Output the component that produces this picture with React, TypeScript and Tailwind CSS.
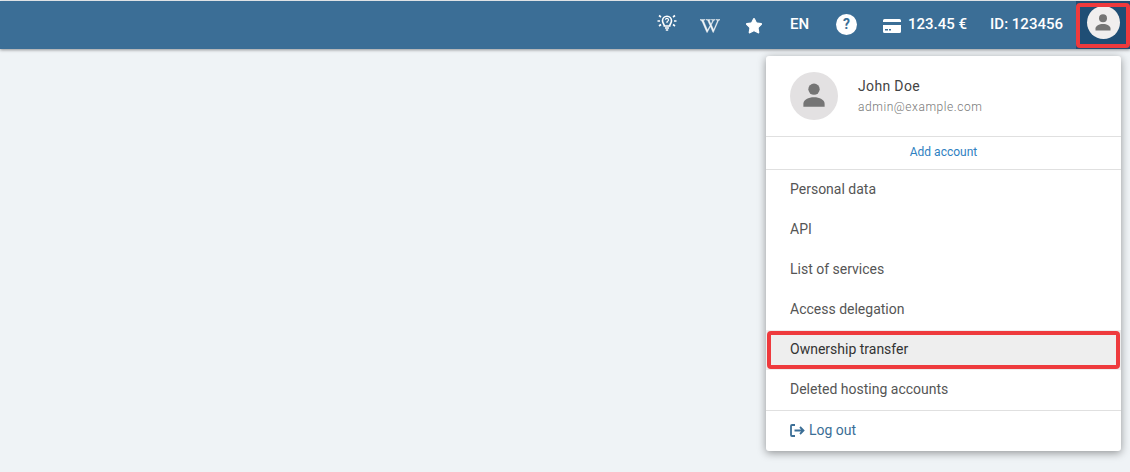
import { Star } from "lucide-react";
import { FaWikipediaW } from "react-icons/fa";

const Avatar = ({ size }: { size: number }) => (
  <svg width={size} height={size} viewBox="0 0 24 24" fill="#757575">
    <circle cx="12" cy="7.2" r="4" />
    <path d="M4.500 19.500v-2c0-2.800 3.600-4.600 7.500-4.600s7.500 1.800 7.500 4.600v2z" />
  </svg>
);

const items = ["Personal data", "API", "List of services", "Access delegation", "Ownership transfer", "Deleted hosting accounts"];

const App = () => {
  return (
    <div className="relative h-[472px] w-[1130px] overflow-hidden bg-[#eff3f6] font-['Roboto',sans-serif]">
      <header className="mt-px flex h-[48px] items-center justify-end bg-[#3b6e96] text-white shadow-[0_1px_3px_rgba(0,0,0,0.4)]">
        <svg className="mr-[23px] mb-1" width="20" height="20" viewBox="0 0 20 20" fill="none" stroke="white" strokeWidth="1.600">
          <path d="M7.300 13c0-2-1.800-2.700-1.800-5.200a4.500 4.500 0 0 1 9 0c0 2.500-1.800 3.200-1.800 5.200z" />
          <path d="M8 15h4M8.800 17h2.400" />
          <path d="M8.500 6.800a1.500 1.500 0 1 1 2 1.500l-0.500 0.500v1.200" strokeWidth="1.100" />
          <path d="M0.500 8h2.500M17 8h2.500M2 2.500l2 1.500M18 2.500l-2 1.500M2 13l2-1.500M18 13l-2-1.500" />
        </svg>
        <FaWikipediaW className="mr-[25px] mt-[2px] text-[#f1f5f8]" size={20} stroke="currentColor" strokeWidth={12} />
        <Star className="mr-[27px] mt-[2px]" size={18} fill="white" strokeWidth={1.5} />
        <span className="mr-[27px] mb-[2px] text-[15px] font-medium">EN</span>
        <div className="mr-[26px] mb-px flex h-[21px] w-[21px] items-center justify-center rounded-full bg-white text-[14px] font-bold text-[#3b6e96]">?</div>
        <svg className="mr-[7px] mt-px" width="18" height="14" viewBox="0 0 18 14" fill="white">
          <path d="M1.500 0h15A1.500 1.500 0 0 1 18 1.500V3H0V1.500A1.500 1.500 0 0 1 1.500 0zM0 6h18v6.500a1.500 1.500 0 0 1-1.500 1.500h-15A1.500 1.500 0 0 1 0 12.500zM2 10v1.500h3V10zM6 10v1.500h2V10z" fillRule="evenodd" />
        </svg>
        <span className="mr-[23px] mb-[2px] text-[15px] font-medium">123.45 €</span>
        <span className="mr-[13px] mb-[2px] text-[15px] font-medium">ID: 123456</span>
        <div className="flex h-[48px] w-[54px] items-start justify-center bg-[#1f4e75] pt-[5px] pl-[3px] pr-[3px]">
          <div className="flex h-[33px] w-[33px] items-center justify-center rounded-full bg-[#f0eeee]">
            <Avatar size={24} />
          </div>
        </div>
      </header>
      <div className="absolute left-[1076px] top-[3px] h-[45px] w-[54px] rounded-[4px] border-4 border-[#ee3a3d]" />

      <div className="absolute left-[766px] top-[56px] w-[355px] rounded-[3px] bg-white shadow-[0_2px_8px_rgba(0,0,0,0.4)]">
        <div className="flex h-[81px] items-center border-b border-[#e0e0e0] pl-6">
          <div className="flex h-12 w-12 items-center justify-center rounded-full bg-[#e3e1e2]">
            <Avatar size={34} />
          </div>
          <div className="ml-5 pb-[2px]">
            <div className="text-sm leading-5 tracking-[0.35px] text-[#444]">John Doe</div>
            <div className="mt-[3px] text-xs leading-4 font-light tracking-[0.55px] text-[#777]">admin@example.com</div>
          </div>
        </div>
        <div className="flex h-[33px] items-center justify-center border-b border-[#e0e0e0] pb-[2px] text-xs text-[#2f7fc1]">Add account</div>
        {items.map((item) => (
          <div key={item} className={`flex h-10 items-center pb-[2px] pl-6 text-sm ${item === "Ownership transfer" ? "bg-[#eeeeee] text-[#333]" : "text-[#555]"}`}>
            {item}
          </div>
        ))}
        <div className="flex h-[41px] items-center gap-1 border-t border-[#e0e0e0] pb-[2px] pl-6 text-sm text-[#3b6e96]">
          <svg width="15" height="13" viewBox="0 0 15 13" fill="none" stroke="#3b6e96" strokeWidth="1.800">
            <path d="M5 1H2a1 1 0 0 0-1 1v9a1 1 0 0 0 1 1h3M4.500 6.500H13M10 3l3.500 3.500L10 10" />
          </svg>
          Log out
        </div>
        <div className="absolute left-[1px] top-[275px] h-[38px] w-[353px] rounded-[4px] border-4 border-[#ee3a3d]" />
      </div>
    </div>
  );
};

export default App;
